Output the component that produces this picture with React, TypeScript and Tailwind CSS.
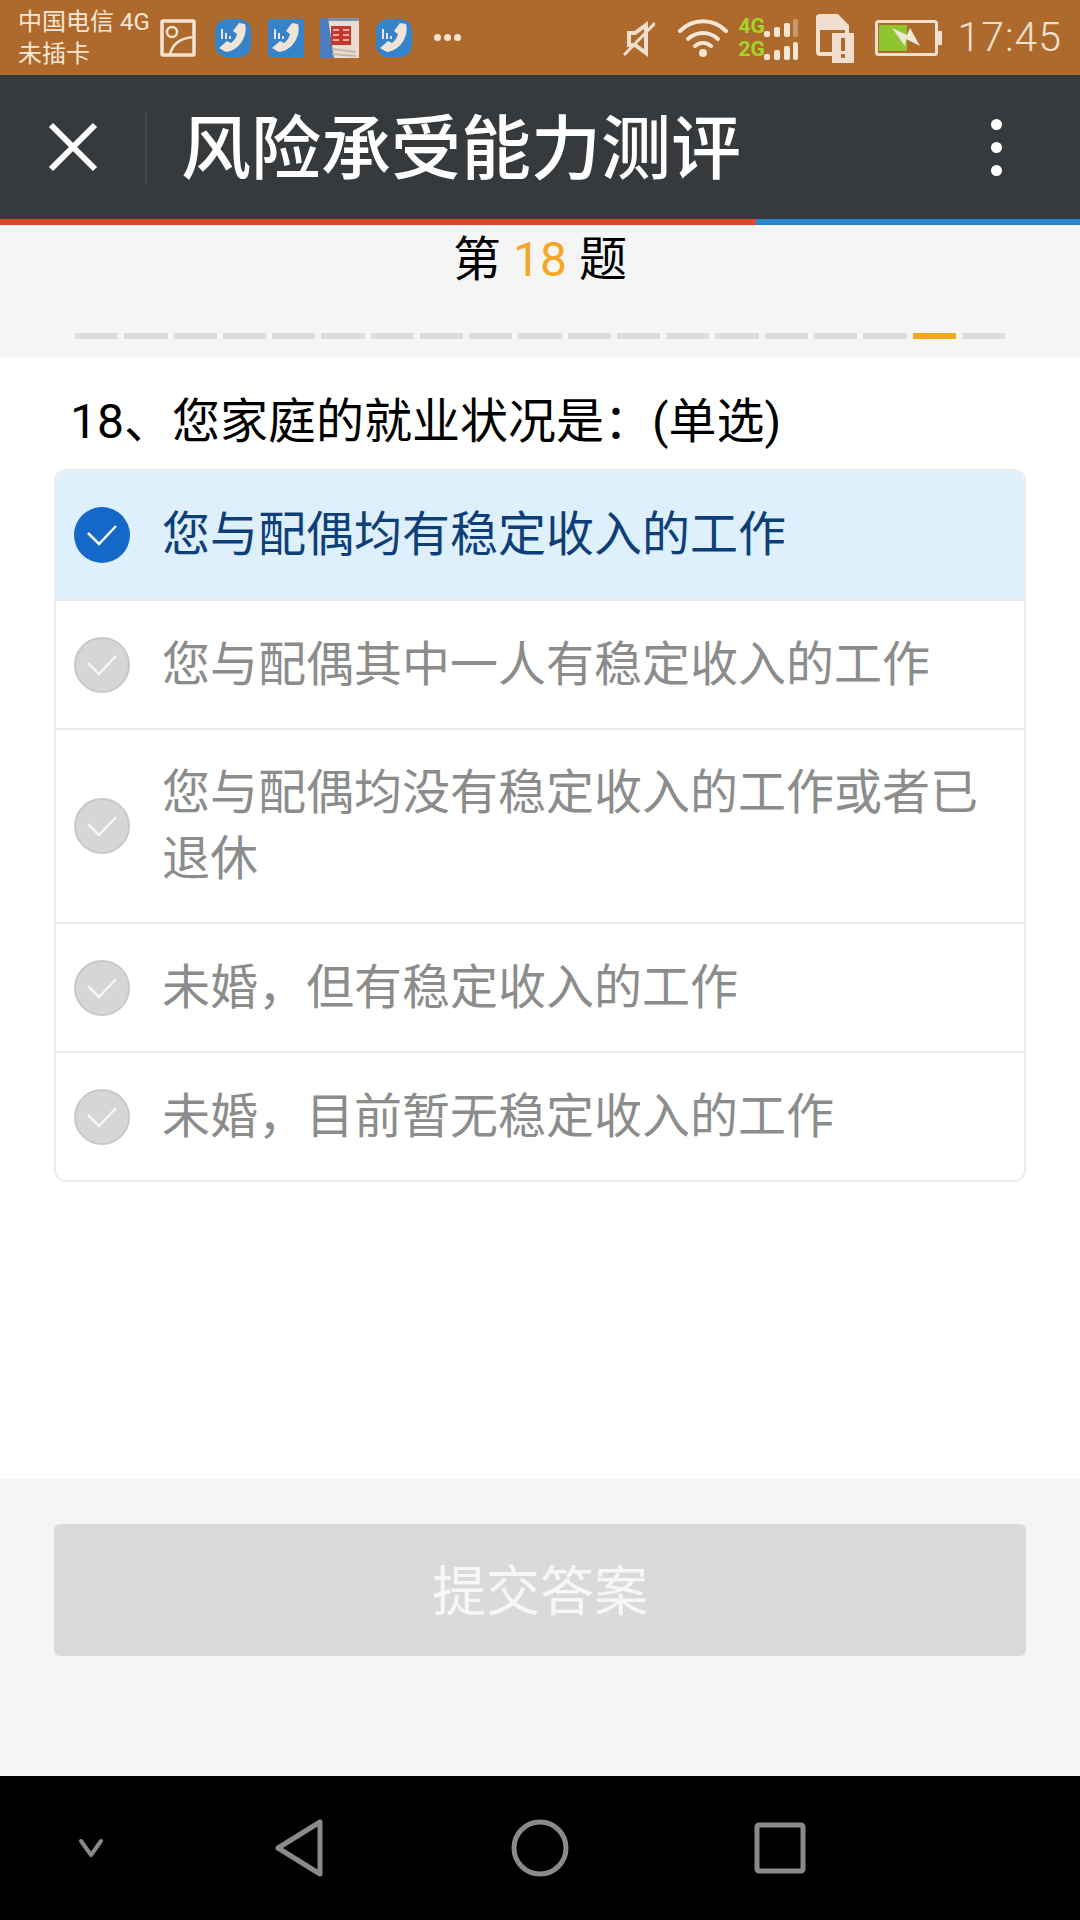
import { Fragment } from "react";

const font = "font-['Roboto','Noto_Sans_CJK_SC',sans-serif]";

const options = [
  "您与配偶均有稳定收入的工作",
  "您与配偶其中一人有稳定收入的工作",
  "您与配偶均没有稳定收入的工作或者已退休",
  "未婚，但有稳定收入的工作",
  "未婚，目前暂无稳定收入的工作",
];

function PhoneApp({ square }: { square?: boolean }) {
  return (
    <svg width="36" height="38" viewBox="0 0 36 38">
      <rect width="36" height="38" rx={square ? 1 : 12} fill="#3583c9" />
      <path d="M30 5c3 10-4 26-19 28l-7-4 8-7 4 2c3-2 5-5 6-9l-4-3 6-8z" fill="#f0e4d8" />
      <path d="M7 10v10M11 14v6M15 17v3" stroke="#f0e4d8" strokeWidth="2" />
    </svg>
  );
}

function StatusLeft() {
  return (
    <div className="flex items-center">
      <div className="w-[140px] pl-[18px] text-[24px] leading-[32px] text-[#f6e6d6]">
        <div className="whitespace-nowrap">中国电信 4G</div>
        <div>未插卡</div>
      </div>
      <div className="ml-[20px] flex items-center">
        <svg width="36" height="38" viewBox="0 0 36 38" fill="none" stroke="#f3e3d3" strokeWidth="3.5">
          <rect x="2" y="2" width="32" height="34" rx="1" />
          <circle cx="12" cy="13" r="5" strokeWidth="2.5" />
          <path d="M10 36c2-11 10-17 24-18" strokeWidth="2.5" />
        </svg>
        <div className="ml-[19px]"><PhoneApp /></div>
        <div className="ml-[17px]"><PhoneApp square /></div>
        <svg className="ml-[16px]" width="39" height="40" viewBox="0 0 39 40">
          <rect width="39" height="40" fill="#e8ddd0" />
          <path d="M0 0h8l6 40H0z" fill="#4a7cc0" />
          <path d="M8 0h31v3H8z" fill="#7d8fb0" />
          <rect x="11" y="8" width="20" height="19" fill="#c9372c" />
          <path d="M13 12h6M13 17h6M13 22h6M23 12h6M23 17h6M23 22h6" stroke="#eed6c6" strokeWidth="1.5" />
          <path d="M12 31l24 3M12 36l24 2" stroke="#c4b8ac" strokeWidth="2" />
        </svg>
        <div className="ml-[17px]"><PhoneApp /></div>
        <div className="ml-[22px] flex gap-[3px]">
          <span className="h-[7px] w-[7px] rounded-full bg-[#f3e3d3]" />
          <span className="h-[7px] w-[7px] rounded-full bg-[#f3e3d3]" />
          <span className="h-[7px] w-[7px] rounded-full bg-[#f3e3d3]" />
        </div>
      </div>
    </div>
  );
}

function SignalBars({ dim }: { dim?: boolean }) {
  return (
    <svg width="34" height="20" viewBox="0 0 34 20" className="absolute right-0">
      <rect x="0" y="13" width="6" height="6" rx="2" fill="#f6e6d6" />
      <rect x="10" y="9" width="6" height="10" rx="2" fill="#f6e6d6" />
      <rect x="20" y="5" width="6" height="14" rx="2" fill="#f6e6d6" />
      <rect x="29" y="1" width="5" height="18" rx="2" fill={dim ? "#c79a6e" : "#f6e6d6"} />
    </svg>
  );
}

function StatusRight() {
  return (
    <div className="flex items-center pr-[18px]">
      <svg width="32" height="42" viewBox="0 0 32 42" fill="none" stroke="#f0dfcf" strokeWidth="4">
        <path d="M6 16h6l11-8v28l-11-8H6z" />
        <path d="M1 38L32 6" strokeWidth="3" />
      </svg>
      <svg className="ml-[23px]" width="50" height="40" viewBox="0 0 50 40" fill="none" stroke="#f6e6d6" strokeWidth="4" strokeLinecap="round">
        <path d="M2 13c13-13 33-13 46 0" />
        <path d="M10 21c9-8 21-8 30 0" />
        <path d="M17 28c5-4 11-4 16 0" />
        <circle cx="25" cy="35" r="2" fill="#f6e6d6" />
      </svg>
      <div className="relative ml-[10px] h-[46px] w-[60px] font-['Roboto',sans-serif] text-[21px] font-bold leading-[23px] text-[#a6d32a]">
        <div className="absolute top-[3px] right-0 w-full"><SignalBars dim /></div>
        <div className="absolute top-[26px] right-0 w-full"><SignalBars /></div>
        <div className="absolute top-0 left-0">4G</div>
        <div className="absolute top-[23px] left-0">2G</div>
      </div>
      <svg className="ml-[18px]" width="38" height="50" viewBox="0 0 38 50">
        <path d="M4 3h17l10 10v18H26v10H4a2 2 0 0 1-2-2V5a2 2 0 0 1 2-2z" fill="none" stroke="#f0dfcf" strokeWidth="4" />
        <path d="M4 3h17l10 10v4H2V5z" fill="#f0dfcf" />
        <rect x="16" y="20" width="22" height="30" rx="1" fill="#f0dfcf" />
        <rect x="25" y="25" width="4" height="13" fill="#ae6a2c" />
        <rect x="25" y="41" width="4" height="4" fill="#ae6a2c" />
      </svg>
      <svg className="ml-[21px]" width="67" height="36" viewBox="0 0 67 36">
        <rect x="1.5" y="1.5" width="60" height="33" rx="2" fill="none" stroke="#f0dfcf" strokeWidth="3" />
        <rect x="63" y="11" width="4" height="14" fill="#f0dfcf" />
        <rect x="4" y="5" width="28" height="26" fill="#8fc531" />
        <path d="M17 8l15 7 3-7 10 18-14-7-1 7z" fill="#f3e6d8" />
      </svg>
      <div className="ml-[15px] font-['Roboto',sans-serif] text-[41px] leading-none font-light tracking-[1px] text-[#f0e0d0]">17:45</div>
    </div>
  );
}

function Header() {
  return (
    <div className="flex h-[144px] items-center bg-[#373a3d]">
      <svg className="ml-[48px]" width="50" height="50" viewBox="0 0 50 50" fill="none" stroke="white" strokeWidth="6">
        <path d="M3 3l44 44M47 3L3 47" />
      </svg>
      <div className="ml-[47px] h-[72px] w-[2px] bg-[#43474a]" />
      <div className="mt-[6px] ml-[34px] text-[70px] leading-none font-medium text-white">风险承受能力测评</div>
      <div className="mr-[78px] ml-auto flex flex-col gap-[12px]">
        <span className="h-[11px] w-[11px] rounded-full bg-white" />
        <span className="h-[11px] w-[11px] rounded-full bg-white" />
        <span className="h-[11px] w-[11px] rounded-full bg-white" />
      </div>
    </div>
  );
}

function CheckCircle({ on }: { on: boolean }) {
  return (
    <div className={on
      ? "flex h-[56px] w-[56px] shrink-0 items-center justify-center rounded-full bg-[#1469c8]"
      : "flex h-[56px] w-[56px] shrink-0 items-center justify-center rounded-full border-2 border-[#c8c8c8] bg-[#d6d6d6]"}>
      <svg width="32" height="24" viewBox="0 0 32 24" fill="none" stroke="white" strokeWidth="2.5" className={on ? "" : "opacity-80"}>
        <path d="M2 10l11 11L30 3" />
      </svg>
    </div>
  );
}

function NavBar() {
  return (
    <div className="flex h-[144px] items-center bg-black">
      <svg className="ml-[76px]" width="30" height="20" viewBox="0 0 30 20" fill="none" stroke="#8a8a8a" strokeWidth="4" strokeLinecap="round" strokeLinejoin="round">
        <path d="M5 3l10 14 10-14" />
      </svg>
      <svg className="ml-[168px]" width="52" height="60" viewBox="0 0 52 60" fill="none" stroke="#8a8a8a" strokeWidth="5" strokeLinejoin="round">
        <path d="M46 4v52L4 30z" />
      </svg>
      <svg className="ml-[184px]" width="60" height="60" viewBox="0 0 60 60" fill="none" stroke="#8a8a8a" strokeWidth="5">
        <circle cx="30" cy="30" r="26" />
      </svg>
      <svg className="ml-[184px]" width="52" height="52" viewBox="0 0 52 52" fill="none" stroke="#8a8a8a" strokeWidth="5" strokeLinejoin="round">
        <rect x="3" y="3" width="46" height="46" rx="2" />
      </svg>
    </div>
  );
}

export default function App() {
  return (
    <div className={`flex h-[1920px] w-[1080px] flex-col overflow-hidden bg-white ${font}`}>
      <div className="flex h-[75px] items-center justify-between bg-[#ae6a2c]">
        <StatusLeft />
        <StatusRight />
      </div>
      <Header />
      <div className="flex h-[6px]">
        <div className="w-[756px] bg-[#d9472f]" />
        <div className="flex-1 bg-[#2a85cf]" />
      </div>

      <div className="h-[132px] bg-[#f5f5f5] pt-[7px]">
        <div className="text-center text-[48px] leading-[56px] text-black">
          第 <span className="text-[#f5a623]">18</span> 题
        </div>
        <div className="mt-[45px] flex gap-[6px] px-[75px]">
          {Array.from({ length: 19 }).map((_, i) => (
            <div key={i} className={i === 17 ? "h-[6px] flex-1 bg-[#f5a81c]" : "h-[6px] flex-1 bg-[#dcdcdc]"} />
          ))}
        </div>
      </div>

      <div className="flex-1 px-[54px]">
        <div className="mt-[35px] pl-[16px] text-[48px] leading-[60px] whitespace-nowrap text-black">
          18、您家庭的就业状况是：(单选)
        </div>
        <div className="mt-[17px] overflow-hidden rounded-[12px] border-2 border-[#ececec]">
          {options.map((text, i) => (
            <Fragment key={text}>
              {i > 0 && <div className="h-[2px] bg-[#e8e8e8]" />}
              <div className={i === 0
                ? "flex min-h-[128px] items-center gap-[32px] bg-[#ddf0fc] px-[18px] text-[48px] leading-[66px] text-[#0f3f78]"
                : "flex min-h-[127px] items-center gap-[32px] px-[18px] py-[30px] text-[48px] leading-[66px] text-[#8c8c8c]"}>
                <CheckCircle on={i === 0} />
                <div>{text}</div>
              </div>
            </Fragment>
          ))}
        </div>
      </div>

      <div className="h-[297px] bg-[#f5f5f5] px-[54px] pt-[45px]">
        <div className="flex h-[132px] items-center justify-center rounded-[6px] bg-[#dadada] pt-[4px] text-[54px] text-[#f7f7f7]">
          提交答案
        </div>
      </div>
      <NavBar />
    </div>
  );
}
